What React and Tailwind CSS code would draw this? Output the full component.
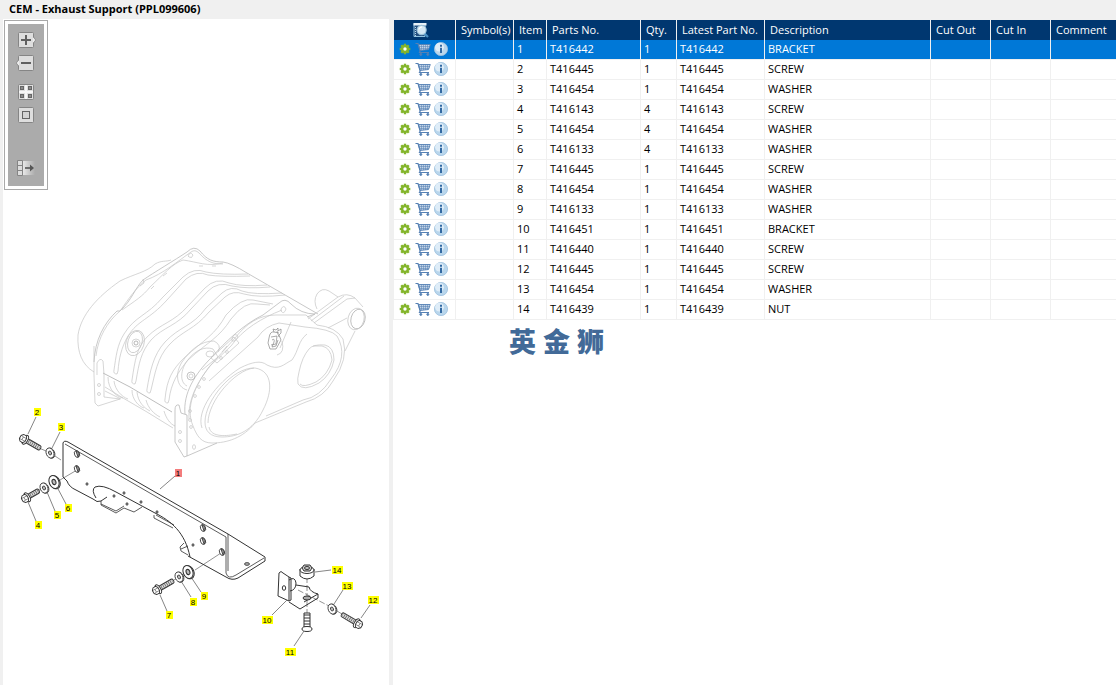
import { Fragment } from "react";

// ======================================================
// PARTS CATALOGUE — illustration on the left, parts on the right
// ======================================================

const PARTS = [
  { item: 1, part: "T416442", qty: 1, name: "BRACKET" },
  { item: 2, part: "T416445", qty: 1, name: "SCREW" },
  { item: 3, part: "T416454", qty: 1, name: "WASHER" },
  { item: 4, part: "T416143", qty: 4, name: "SCREW" },
  { item: 5, part: "T416454", qty: 4, name: "WASHER" },
  { item: 6, part: "T416133", qty: 4, name: "WASHER" },
  { item: 7, part: "T416445", qty: 1, name: "SCREW" },
  { item: 8, part: "T416454", qty: 1, name: "WASHER" },
  { item: 9, part: "T416133", qty: 1, name: "WASHER" },
  { item: 10, part: "T416451", qty: 1, name: "BRACKET" },
  { item: 11, part: "T416440", qty: 1, name: "SCREW" },
  { item: 12, part: "T416445", qty: 1, name: "SCREW" },
  { item: 13, part: "T416454", qty: 1, name: "WASHER" },
  { item: 14, part: "T416439", qty: 1, name: "NUT" },
];

const HEADINGS = [
  "Symbol(s)",
  "Item",
  "Parts No.",
  "Qty.",
  "Latest Part No.",
  "Description",
  "Cut Out",
  "Cut In",
  "Comment",
];

// label centre + leader line
const CALLOUTS = [
  { n: 1, x: 178, y: 473, line: "M175 476 160 489" },
  { n: 2, x: 37, y: 412, line: "M36 417 28 434" },
  { n: 3, x: 61, y: 427, line: "M60 432 52 448" },
  { n: 4, x: 38, y: 525, line: "M36 521 28 502" },
  { n: 5, x: 57, y: 515, line: "M55 511 47 492" },
  { n: 6, x: 68, y: 508, line: "M66 504 57 487" },
  { n: 7, x: 169, y: 615, line: "M167 611 160 595" },
  { n: 8, x: 193, y: 602, line: "M191 597 181 581" },
  { n: 9, x: 204, y: 596, line: "M201 592 191 577" },
  { n: 10, x: 267, y: 620, line: "M272 615 287 600" },
  { n: 11, x: 290, y: 652, line: "M294 646 304 631" },
  { n: 12, x: 373, y: 600, line: "M370 605 361 618" },
  { n: 13, x: 347, y: 586, line: "M343 590 334 604" },
  { n: 14, x: 337, y: 570, line: "M331 570 315 572" },
];

// ──────────────────────────────────────────────
// ICONS
// ──────────────────────────────────────────────
const Gear = () => (
  <svg viewBox="0 0 12 12" className="h-3 w-3">
    <g fill="#83b52b">
      {[0, 45, 90, 135].map((a) => (
        <rect key={a} x="4.8" y="0.7" width="2.4" height="10.6" transform={`rotate(${a} 6 6)`} />
      ))}
    </g>
    <circle cx="6" cy="6" r="3" fill="none" stroke="#83b52b" strokeWidth="2.2" />
    <circle cx="6" cy="6" r="1.7" fill="#fff" />
  </svg>
);

const Cart = () => (
  <svg viewBox="0 0 16 14" className="h-[14px] w-4" fill="none" stroke="#5580b3">
    <path d="M3.5 2.5H15.3L13.5 7.5 5 8.5Z" fill="#c3d4e7" strokeWidth="0.9" />
    <path d="M0.5 1.5H3L5.2 9 4.5 10.5H14" strokeWidth="1.2" />
    <path d="M4.5 4.5H14.5M5 6.5H13.8M6.5 2.5V8M8.5 2.5V8M10.5 2.5V8M12.5 2.5V7.5" strokeWidth="0.5" />
    <circle cx="5.8" cy="12.4" r="1" fill="#5580b3" />
    <circle cx="12.8" cy="12.4" r="1" fill="#5580b3" />
  </svg>
);

const Info = () => (
  <svg viewBox="0 0 14 14" className="h-[14px] w-[14px]">
    <circle cx="7" cy="7" r="6.6" fill="#b9d6ec" stroke="#9dc0de" strokeWidth="0.8" />
    <circle cx="5.5" cy="5.2" r="4.4" fill="#dfedf8" />
    <path d="M6 2.8H8V4.8H6ZM6 5.8H8V11H6Z" fill="#336aa3" />
  </svg>
);

const SearchTable = () => (
  <svg viewBox="0 0 16 16" className="mx-auto h-4 w-4">
    <path d="M1 1.5H12V14.5H1Z" fill="#234f80" stroke="#8fc1df" />
    <path d="M0.5 1H13.5V3.5H0.5Z" fill="#e6f1f8" />
    <path d="M2.5 5V14" stroke="#b8d6e8" strokeDasharray="1 1" />
    <path d="M11.5 11.5 15 15" stroke="#4a90c4" strokeWidth="2.2" />
    <circle cx="8.6" cy="8" r="4.6" fill="#d5e8f4" stroke="#9cc3da" strokeWidth="1.1" />
    <path d="M6 7.5Q6.5 5 9 5" fill="none" stroke="#fff" strokeWidth="1.2" />
  </svg>
);

const ToolFrame = () => (
  <rect x="2.5" y="1.5" width="15" height="15" rx="1" fill="#dedede" stroke="#858585" />
);

const ZoomInIcon = () => (
  <svg viewBox="0 0 20 18" className="h-[18px] w-5">
    <ToolFrame />
    <path d="M17 6 19.5 9 17 12Z" fill="#eee" />
    <path d="M17.5 6 19.7 9 17.5 12" fill="none" stroke="#858585" strokeWidth="0.7" />
    <path d="M5 9H15M10 4V14" stroke="#606060" strokeWidth="2" />
  </svg>
);

const ZoomOutIcon = () => (
  <svg viewBox="0 0 20 18" className="h-[18px] w-5">
    <ToolFrame />
    <path d="M3 6 0.5 9 3 12Z" fill="#eee" />
    <path d="M2.5 6 0.3 9 2.5 12" fill="none" stroke="#858585" strokeWidth="0.7" />
    <path d="M5 9H15" stroke="#606060" strokeWidth="2" />
  </svg>
);

const FitIcon = () => (
  <svg viewBox="0 0 20 18" className="h-[18px] w-5">
    <ToolFrame />
    <path d="M10 2V16M3 9H17" stroke="#f7f7f7" strokeWidth="2" />
    <g fill="#8b8b8b" stroke="#666">
      <rect x="4.5" y="3.5" width="3" height="3" />
      <rect x="12.5" y="3.5" width="3" height="3" />
      <rect x="4.5" y="11.5" width="3" height="3" />
      <rect x="12.5" y="11.5" width="3" height="3" />
    </g>
  </svg>
);

const ActualSizeIcon = () => (
  <svg viewBox="0 0 20 18" className="h-[18px] w-5">
    <ToolFrame />
    <rect x="6.5" y="5.5" width="7" height="7" fill="#d5d5d5" stroke="#666" />
  </svg>
);

const PanelIcon = () => (
  <svg viewBox="0 0 20 18" className="h-[18px] w-5">
    <defs>
      <linearGradient id="fade">
        <stop offset="0" stopColor="#e8e8e8" />
        <stop offset="1" stopColor="#ababab" />
      </linearGradient>
    </defs>
    <rect x="7" y="2" width="12" height="14" fill="url(#fade)" />
    <path d="M1.5 1.5H6.5V16.5H1.5ZM1.5 6.5H6.5M1.5 11.5H6.5" fill="#ddd" stroke="#858585" />
    <path d="M9 9H15" stroke="#555" strokeWidth="1.6" />
    <path d="M14 5.5 18 9 14 12.5Z" fill="#555" />
  </svg>
);

// ──────────────────────────────────────────────
// ILLUSTRATION
// ──────────────────────────────────────────────
const Washer = ({ x, y, s = 1 }) => (
  <g transform={`translate(${x} ${y}) rotate(-22) scale(${s})`} fill="#fff" strokeWidth="0.9">
    <ellipse cx="0.8" cy="0.6" rx="4.2" ry="5.8" />
    <ellipse rx="4.2" ry="5.8" />
    <ellipse rx="1.6" ry="2.3" fill="#bbb" />
  </g>
);

const Screw = ({ x, y, angle, length = 20 }) => (
  <g transform={`translate(${x} ${y}) rotate(${angle})`} fill="#fff" strokeWidth="0.9">
    <rect x="3" y="-2.3" width={length - 3} height="4.6" rx="1.5" fill="#ddd" />
    <path d={`M5 0H${length - 1}`} strokeWidth="4.4" strokeDasharray="0.8 1.3" stroke="#666" />
    <ellipse cx="1.5" rx="2.4" ry="4.9" />
    <path d="M0.5-4-2.5-3.8-4.3-1.8-4.3 1.8-2.5 3.8 0.5 4 2 1.8V-1.8Z" />
    <path d="M-4.3-1.8-1.5-1.5H2M-4.3 1.8-1.5 1.6H2M-1.5-1.5V1.6" fill="none" strokeWidth="0.5" />
  </g>
);

const Canister = () => (
  <g fill="none" stroke="#c4c4c4" strokeWidth="0.7">
    {/* shell */}
    <path d="M94 372C82 365 77 352 78 335 81 315 97 297 120 281 134 274 147 272 155 264 162 260 166 262 171 260" />
    <path d="M94 362C95 340 104 323 117 311H120C132 300 135 288 143 280 153 273 175 260 187 252Q194 245 200 251C207 260 213 262 223 262Q231 263 247 273L318 314" stroke="#b0b0b0" />
    <path d="M96 356C98 338 107 322 120 311 130 297 135 289 146 280 163 274 178 261 191 252Q195 249 199 253C207 262 213 264 223 264" />
    <path d="M122 310C135 301 143 296 150 287 164 274 172 264 183 260 198 262 207 267 223 263" />
    <path d="M188 256Q190 251 193 255 192 259 189 257ZM151 289 154 286M163 276 167 273M199 266H203M212 266H216M140 286 144 283 143 279" />
    {/* ribs */}
    <path d="M114 370C116 357 117 345 124 334 135 316 147 316 163 297L183 277Q194 267 206 272 220 275 248 274" />
    <path d="M118 371C119 359 121 348 128 336 138 320 149 320 167 300L186 279Q197 270 208 275 221 277 250 276M114 370Q113 374 117 374L118 371" />
    <path d="M132 380C135 360 137 347 147 337 161 323 173 323 188 306L205 288Q216 277 229 283 242 287 267 285" />
    <path d="M136 381C139 363 141 352 151 340 163 327 177 326 191 309L208 291Q218 281 232 286 247 289 270 287M132 380Q131 384 135 384L136 381" />
    <path d="M147 389C150 372 153 355 165 342 180 326 192 327 206 308L222 293Q231 285 242 291 253 295 282 293" />
    <path d="M151 390C155 374 157 358 169 345 183 330 194 330 209 312L225 297Q233 290 244 294 258 298 285 295M147 389Q146 393 150 393L151 390" />
    <path d="M165 399C167 379 172 370 184 358 205 339 215 335 226 315Q242 297 253 300L273 304" />
    <path d="M169 400C171 383 178 372 188 360 209 341 219 338 231 319Q245 301 257 304L270 305M165 399Q164 403 168 403L169 400" />
    {/* sensor bosses */}
    <ellipse cx="135" cy="342" rx="7" ry="11" transform="rotate(18 135 342)" />
    <ellipse cx="135" cy="343" rx="9" ry="13" transform="rotate(18 135 343)" />
    <circle cx="136" cy="343" r="4" />
    <circle cx="136" cy="343" r="2" stroke="#999" />
    <path d="M187 390C176 387 175 373 182 362 191 349 201 341 214 341Q222 345 218 352" />
    <path d="M187 386C179 382 181 369 187 361 195 350 205 346 213 349L218 357 202 370" />
    <circle cx="191" cy="376" r="4" stroke="#aaa" />
    <circle cx="191" cy="376" r="2" />
    <ellipse cx="210" cy="354" rx="4" ry="3" />
    {/* lower rim */}
    <path d="M103 373 130 387 172 412" stroke="#a0a0a0" />
    <path d="M105 387 123 398 147 412 173 428M105 391 121 399M108 377C108 390 117 397 123 398M114 381C115 390 122 397 128 399M132 390C132 399 138 406 144 408M137 392C138 402 144 408 150 411M146 400C148 408 154 414 160 417M164 411C166 418 170 424 175 426" />
    {/* mounting feet */}
    <path d="M94 346V375L95 403 98 406 120 399 104 397V374L103 361Q100 357 97 363V375" />
    <circle cx="99" cy="385" r="1.5" />
    <circle cx="99" cy="394" r="1.5" />
    <path d="M175 410Q175 404 179 405L181 413 187 415V456L184 457 175 442ZM187 456 217 443" stroke="#b0b0b0" />
    <circle cx="180" cy="432" r="1.5" />
    <circle cx="180" cy="441" r="1.5" />
    <ellipse cx="194" cy="447" rx="1.5" ry="2.3" />
    {/* front cover */}
    <path d="M185 414C183 393 195 374 211 358 225 342 244 324 263 315L279 303Q285 297 291 304 301 314 315 314L307 317" stroke="#b2b2b2" />
    <path d="M193 426C185 407 195 386 209 367L235 338C247 323 259 315 276 315H306L317 325Q336 327 343 339 349 359 333 381 324 397 306 402L255 423C243 438 227 443 212 443 201 443 197 436 193 426Z" />
    <path d="M189 419C188 401 196 383 211 365L231 346C243 329 262 318 282 310M209 381 258 337Q265 326 279 323L305 327Q331 329 337 336 349 356 331 379 320 397 303 400L266 416" />
    <path d="M205 422C205 401 232 367 255 368 273 371 273 391 263 410 253 431 237 437 222 437 210 437 205 431 205 422Z" />
    <path d="M208 423C208 401 235 370 254 368M209 427C211 438 227 436 237 434M202 428C196 411 215 384 240 368 252 362 261 360 267 365 279 371 284 364 292 360 299 350 298 341 307 334" />
    <path d="M299 372Q302 357 309 349 313 344 325 345 334 347 334 360 331 375 319 383 303 392 298 384 297 379 299 372Z" />
    <path d="M313 346H322Q331 348 332 360 328 375 316 382 303 388 300 384M281 309Q284 304 286 309 284 315 281 311ZM232 339Q234 332 238 336 236 342 232 341Z" />
    <g>
      {[[190, 411], [190, 420], [191, 427], [195, 396], [199, 387], [204, 379], [221, 358], [227, 352]].map(([x, y]) => (
        <circle key={x + y} cx={x} cy={y} r="1.4" />
      ))}
    </g>
    <path d="M211 358 234 337 239 343 217 363ZM222 352 227 346M291 322 280 348M282 341Q285 353 277 355" />
    {/* clamp emblem */}
    <g stroke="#888">
      <path d="M269 338Q270 331 274 332L273 329 276 330 278 328 278 331 281 329V333L279 335 281 340 276 349 270 349 268 343Z" />
      <path d="M271 337 277 336 276 344 271 345M274 332 279 333M272 340Q275 338 274 342L272 347 276 346 278 340M277 331 279 337" />
    </g>
    {/* outlet pipe */}
    <path d="M317 309Q313 301 317 294 322 287 329 291L338 297M308 319 338 297Q347 292 355 298L363 307M314 323 347 299 355 298M311 321 344 296M347 318 328 328M355 331 345 351" />
    <ellipse cx="358" cy="319" rx="7" ry="10" transform="rotate(15 358 319)" stroke="#aaa" />
    <ellipse cx="356" cy="319" rx="8" ry="11" transform="rotate(15 356 319)" />
  </g>
);

const Brackets = () => (
  <g fill="none" stroke="#333" strokeWidth="1">
    {/* centre lines */}
    <g stroke="#777" strokeWidth="0.8">
      <path d="M39 448 46 451M55 456 61 460M38 491 42 488M60 480 77 470M174 580 177 578M195 570 221 553" />
      <path d="M307 577V617M298 590 329 606M337 611 342 614" strokeDasharray="6 2" />
    </g>
    {/* long support bracket */}
    <path d="M63 443Q64 440 68 442L228 534 265 557V561L238 578Q232 581 226 577L188 556" />
    <path d="M63 443V477L67 481Q69 487 76 490L93 499Q97 503 101 501L107 497M96 498Q91 490 95 487 102 484 116 492L155 513C171 521 185 532 190 557" />
    <path d="M65 444 226 537V573Q228 580 236 575L264 558M228 534V571" strokeWidth="0.8" />
    <path d="M101 501V505L116 513 124 508 134 512 142 507M101 504 116 511 124 506M154 515V518L173 528M156 515 174 525M184 543 180 547 181 551 188 555M188 546 181 549" strokeWidth="0.8" />
    <g fill="#aaa" strokeWidth="0.8">
      {[[77, 454], [77, 469], [203, 528], [203, 541], [222, 552]].map(([x, y]) => (
        <g key={`${x}-${y}`} transform={`translate(${x} ${y}) rotate(-20)`}>
          <ellipse rx="2.5" ry="3.5" fill="#fff" />
          <path d="M0-3.5Q4 0 0 3.5Z" />
        </g>
      ))}
      {[[87, 484], [124, 493], [141, 502], [114, 496], [127, 504], [157, 512], [193, 545]].map(([x, y]) => (
        <ellipse key={x} cx={x} cy={y} rx="1" ry="1.3" />
      ))}
      <ellipse cx="247" cy="564" rx="2.5" ry="1.4" />
    </g>
    {/* small bracket */}
    <path d="M279 573Q281 570 283 573L289 577V601L278 596ZM289 577 291 578V600L289 601M289 602 300 609 318 598V594L304 602M296 585 309 587Q310 592 318 594" />
    <path d="M289 580Q295 576 296 583 296 590 290 591" />
    <ellipse cx="284" cy="588" rx="1.7" ry="2.3" />
    <ellipse cx="307" cy="598" rx="4" ry="2" fill="#aaa" />
    {/* nut */}
    <path d="M300 569V576Q307 582 314 576V569" fill="#fff" />
    <ellipse cx="307" cy="570" rx="7" ry="3.5" fill="#fff" />
    <path d="M302 568 304 565H310L312 568 310 571H304Z" fill="#ccc" />
    <ellipse cx="307" cy="568" rx="2.5" ry="1.5" />
    {/* countersunk screw */}
    <path d="M304 613H310V627H304Z" fill="#fff" />
    <path d="M304 615H310M304 618H310M304 621H310M304 624H310" />
    <ellipse cx="307" cy="629" rx="5" ry="2.5" fill="#fff" />
    <Screw x={24} y={439} angle={30} length={19} />
    <Screw x={26} y={498} angle={-30} length={15} />
    <Screw x={157} y={590} angle={-30} length={19} />
    <Screw x={358} y={624} angle={211} length={19} />
    <Washer x={50} y={453} s={0.9} />
    <Washer x={44} y={488} s={0.9} />
    <Washer x={54} y={482} s={1.15} />
    <Washer x={179} y={577} s={0.9} />
    <Washer x={188} y={572} s={1.15} />
    <Washer x={332} y={609} s={0.9} />
  </g>
);

const Illustration = () => (
  <svg viewBox="3 19 386 666" className="block w-full" role="img" aria-label="Exhaust support">
    <Canister />
    <Brackets />
    {CALLOUTS.map(({ n, x, y, line }) => (
      <Fragment key={n}>
        <path d={line} stroke="#666" strokeWidth="0.8" />
        <rect
          x={n > 9 ? x - 5 : x - 3}
          y={y - 4}
          width={n > 9 ? 11 : 7}
          height="8"
          fill={n === 1 ? "#f47c7c" : "#ff0"}
        />
        <text x={x} y={y + 3} textAnchor="middle" className="font-['Liberation_Sans',sans-serif] text-[8px]">
          {n}
        </text>
      </Fragment>
    ))}
  </svg>
);

// ──────────────────────────────────────────────
// TOOLBAR
// ──────────────────────────────────────────────
const Toolbar = () => (
  <div className="absolute top-px left-px border border-[#a9a9a9] bg-white p-[3px]">
    <div className="flex w-9 flex-col items-center bg-[#ababab] pt-[7px] pb-[9px]">
      <button aria-label="Zoom in"><ZoomInIcon /></button>
      <button aria-label="Zoom out" className="mt-[5px]"><ZoomOutIcon /></button>
      <button aria-label="Fit to window" className="mt-[11px]"><FitIcon /></button>
      <button aria-label="Actual size" className="mt-[5px]"><ActualSizeIcon /></button>
      <button aria-label="Toggle list" className="mt-[35px]"><PanelIcon /></button>
    </div>
  </div>
);

// ──────────────────────────────────────────────
// PARTS TABLE
// ──────────────────────────────────────────────
const PartsTable = () => (
  <table className="w-full table-fixed border-separate border-spacing-0 text-left text-[11px] leading-[17px] whitespace-nowrap">
    <colgroup>
      <col className="w-[62px]" />
      <col className="w-[58px]" />
      <col className="w-[33px]" />
      <col className="w-[94px]" />
      <col className="w-9" />
      <col className="w-[88px]" />
      <col className="w-[166px]" />
      <col className="w-[60px]" />
      <col className="w-[60px]" />
      <col />
    </colgroup>
    <thead>
      <tr className="h-5 bg-[#003770] text-white">
        <th className="border-r border-[#f0f0f0] p-0 pr-2">
          <button aria-label="Search parts" className="block w-full"><SearchTable /></button>
        </th>
        {HEADINGS.map((h) => (
          <th key={h} className="border-r border-[#f0f0f0] p-0 pl-[5px] align-top leading-[19px] font-normal last:border-r-0">{h}</th>
        ))}
      </tr>
    </thead>
    <tbody>
      {PARTS.map((p) => (
        <tr
          key={p.item}
          className={`h-5 *:border-r *:border-b *:border-[#f0f0f0] *:p-0 *:pl-[3px] *:align-top *:last:border-r-0 ${
            p.item === 1 ? "bg-[#0078d7] text-white" : "bg-white text-black"
          }`}
        >
          <td>
            <div className="flex h-[18px] items-center gap-[3px] pl-0.5">
              <button aria-label={`Options for item ${p.item}`} className="w-[13px]"><Gear /></button>
              <button aria-label={`Add item ${p.item} to cart`}><Cart /></button>
              <button aria-label={`Details of item ${p.item}`}><Info /></button>
            </div>
          </td>
          <td />
          <td>{p.item}</td>
          <td>{p.part}</td>
          <td>{p.qty}</td>
          <td>{p.part}</td>
          <td>{p.name}</td>
          <td />
          <td />
          <td />
        </tr>
      ))}
    </tbody>
  </table>
);

export default function App() {
  return (
    <div className="flex min-h-screen flex-col bg-[#f0f0f0] font-['Open_Sans',sans-serif] text-black">
      <h1 className="h-[19px] pl-[9px] text-[11px] leading-[17px] font-bold">CEM - Exhaust Support (PPL099606)</h1>
      <div className="flex flex-1 gap-1 pl-[3px]">
        <section className="relative w-[386px] shrink-0 bg-white">
          <Illustration />
          <Toolbar />
        </section>
        <section className="min-w-0 flex-1 bg-white">
          <div className="border-t border-l border-[#f0f0f0]">
            <PartsTable />
          </div>
          <div className="ml-[116px] flex gap-[7px] pt-[3px] font-['Noto_Sans_CJK_SC',sans-serif] text-[27px] leading-9 font-black text-[#426a98]">
            <span>英</span>
            <span>金</span>
            <span>狮</span>
          </div>
        </section>
      </div>
    </div>
  );
}
